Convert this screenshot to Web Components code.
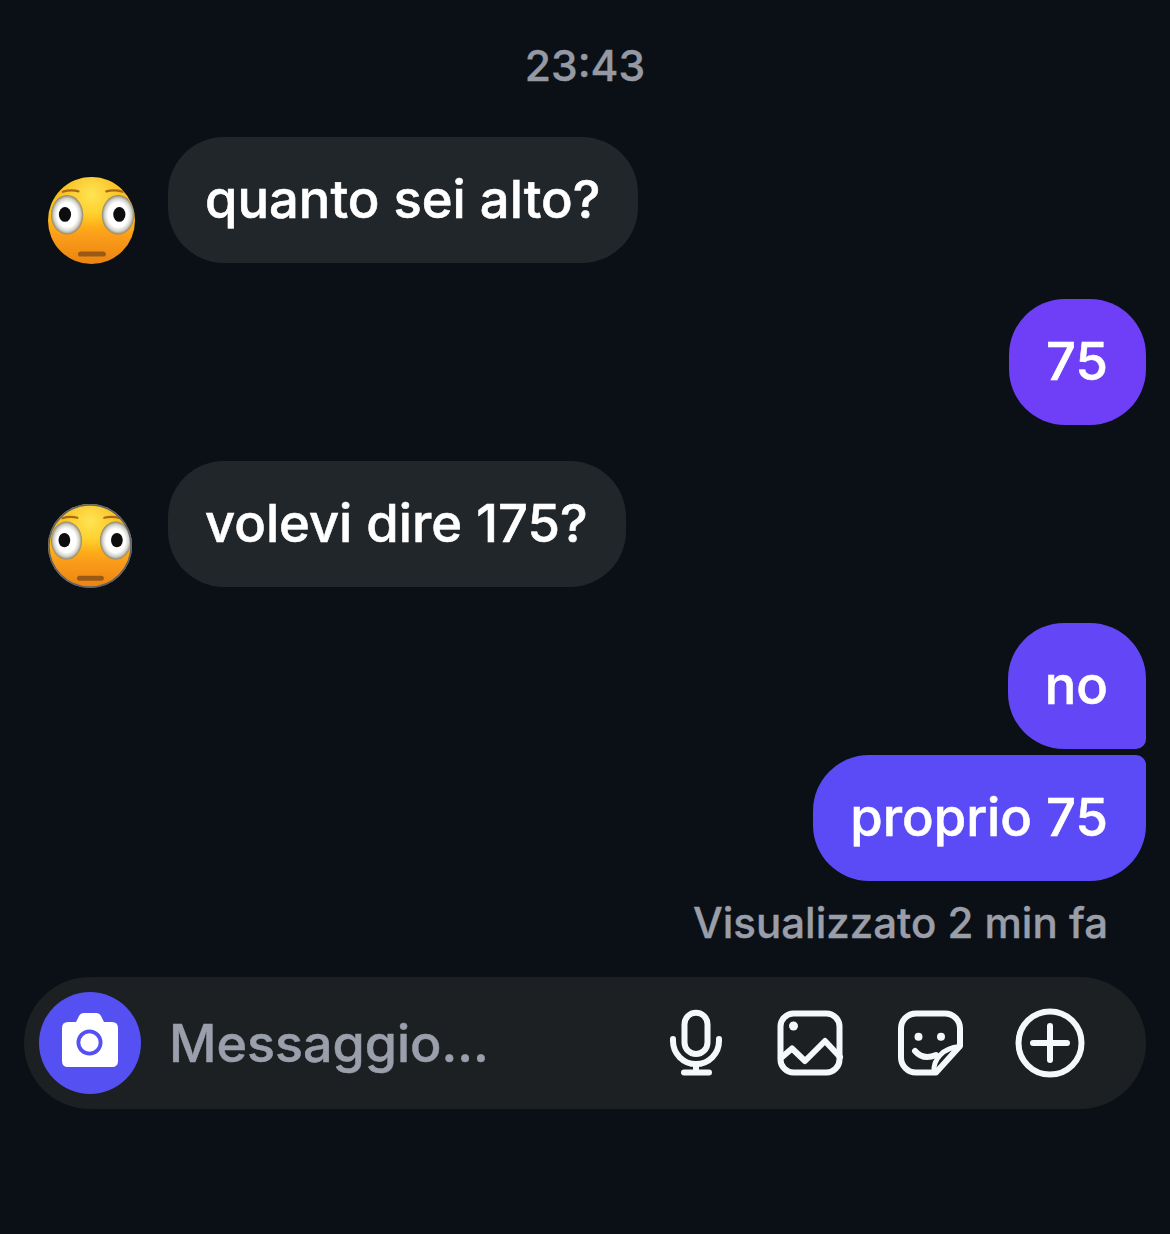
<!DOCTYPE html>
<html lang="it">
<head>
<meta charset="utf-8">
<title>Chat</title>
<style>
  html, body { margin: 0; background: #0b1016; }
  body { font-family: Inter, "Liberation Sans", sans-serif; color: #fff; }
</style>
</head>
<body>
<chat-screen>
  <chat-time>23:43</chat-time>
  <chat-row>
    <flushed-emoji slot="avatar" size="87"></flushed-emoji>
    <chat-bubble color="#21262b">quanto sei alto?</chat-bubble>
  </chat-row>
  <chat-row side="out">
    <chat-bubble color="#6e3ff6">75</chat-bubble>
  </chat-row>
  <chat-row>
    <flushed-emoji slot="avatar" size="84" ringed></flushed-emoji>
    <chat-bubble color="#21262b">volevi dire 175?</chat-bubble>
  </chat-row>
  <chat-row side="out">
    <chat-bubble color="#6346f6" corner="last">no</chat-bubble>
    <chat-bubble color="#5b4bf6" corner="first">proprio 75</chat-bubble>
  </chat-row>
  <chat-seen slot="footer">Visualizzato 2 min fa</chat-seen>
  <chat-composer slot="footer" placeholder="Messaggio..."></chat-composer>
</chat-screen>

<script>
class ChatScreen extends HTMLElement {
    constructor() {
        super();
        this.attachShadow({ mode: "open" });
        this.shadowRoot.innerHTML = `
            <style>
                :host { display: block; width: 1170px; height: 1234px; overflow: hidden; }
                .thread { display: flex; flex-direction: column; gap: 36px; }
            </style>
            <div class="thread"><slot></slot></div>
            <slot name="footer"></slot>
        `;
    }
}

class ChatTime extends HTMLElement {
    constructor() {
        super();
        this.attachShadow({ mode: "open" });
        this.shadowRoot.innerHTML = `
            <style>
                :host {
                    display: block;
                    height: 50px;
                    padding: 41px 0 10px;
                    line-height: 50px;
                    text-align: center;
                    font-size: 42.500px;
                    font-weight: 500;
                    -webkit-text-stroke: 0.4px;
                    color: #9499a3;
                }
            </style>
            <slot></slot>
        `;
    }
}

class ChatRow extends HTMLElement {
    constructor() {
        super();
        this.attachShadow({ mode: "open" });
        this.shadowRoot.innerHTML = `
            <style>
                :host { display: flex; align-items: flex-end; padding: 0 24px 0 48px; }
                :host([side="out"]) { justify-content: flex-end; }
                .avatar { display: block; width: 120px; flex: none; margin-bottom: -1px; }
                :host([side="out"]) .avatar { display: none; }
                .stack { display: flex; flex-direction: column; align-items: flex-end; gap: 6px; }
            </style>
            <div class="avatar"><slot name="avatar"></slot></div>
            <div class="stack"><slot></slot></div>
        `;
    }
}

class ChatBubble extends HTMLElement {
    constructor() {
        super();
        this.attachShadow({ mode: "open" });
        this.shadowRoot.innerHTML = `
            <style>
                :host {
                    display: block;
                    height: 126px;
                    padding: 0 38px 0 37px;
                    line-height: 125px;
                    font-size: 52.500px;
                    font-weight: 500;
                    -webkit-text-stroke: 0.6px;
                    border-radius: 56px;
                    background: var(--bubble);
                    color: #fff;
                    white-space: nowrap;
                }
                :host([corner="last"]) { border-bottom-right-radius: 10px; }
                :host([corner="first"]) { border-top-right-radius: 10px; }
            </style>
            <slot></slot>
        `;
    }
    connectedCallback() {
        this.style.setProperty("--bubble", this.getAttribute("color"));
    }
}

let emojiCount = 0;

class FlushedEmoji extends HTMLElement {
    constructor() {
        super();
        this.attachShadow({ mode: "open" });
    }
    connectedCallback() {
        const size = this.getAttribute("size") || 87;
        const id = "e" + (++emojiCount);
        const ring = this.hasAttribute("ringed")
            ? `<circle cx="50" cy="50" r="49" fill="none" stroke="#5f626c" stroke-width="2"/>`
            : "";
        this.shadowRoot.innerHTML = `
            <style>
                :host { display: block; width: ${size}px; height: ${size}px; }
                svg { display: block; width: 100%; height: 100%; }
            </style>
            <svg viewBox="0 0 100 100">
                <defs>
                    <linearGradient id="${id}f" x1="0" y1="0" x2="0" y2="1">
                        <stop offset="0" stop-color="#f8b820"/>
                        <stop offset="0.4" stop-color="#ffc414"/>
                        <stop offset="0.68" stop-color="#fb9d1a"/>
                        <stop offset="1" stop-color="#ea8410"/>
                    </linearGradient>
                    <radialGradient id="${id}h" cx="0.5" cy="0.2" r="0.38">
                        <stop offset="0" stop-color="#ffe85a" stop-opacity="0.9"/>
                        <stop offset="1" stop-color="#ffe85a" stop-opacity="0"/>
                    </radialGradient>
                    <radialGradient id="${id}e">
                        <stop offset="0.62" stop-color="#ffffff"/>
                        <stop offset="0.83" stop-color="#d5d3cc"/>
                        <stop offset="1" stop-color="#8d8464"/>
                    </radialGradient>
                    <filter id="${id}b"><feGaussianBlur stdDeviation="0.600"/></filter>
                </defs>
                <circle cx="50" cy="50" r="50" fill="url(#${id}f)"/>
                <circle cx="50" cy="50" r="50" fill="url(#${id}h)"/>
                <g filter="url(#${id}b)">
                    <path d="M17 17 Q26 14 35 16.500" fill="none" stroke="#a86a18" stroke-width="2.500" stroke-linecap="round"/>
                    <path d="M67 16.500 Q76 14 86 17" fill="none" stroke="#a86a18" stroke-width="2.500" stroke-linecap="round"/>
                    <ellipse cx="22" cy="43.500" rx="18.500" ry="22.700" fill="url(#${id}e)"/>
                    <ellipse cx="80.500" cy="43.500" rx="18.700" ry="22.700" fill="url(#${id}e)"/>
                    <ellipse cx="19.500" cy="43" rx="7" ry="8.500" fill="#0c0c10"/>
                    <ellipse cx="82" cy="43" rx="7" ry="8.500" fill="#0c0c10"/>
                    <rect x="34.500" y="85.500" width="32" height="6" rx="3" fill="#9a5a18"/>
                </g>
                ${ring}
            </svg>
        `;
    }
}

class ChatSeen extends HTMLElement {
    constructor() {
        super();
        this.attachShadow({ mode: "open" });
        this.shadowRoot.innerHTML = `
            <style>
                :host {
                    display: block;
                    padding: 17px 62px 29px 0;
                    line-height: 50px;
                    text-align: right;
                    font-size: 42px;
                    font-weight: 500;
                    -webkit-text-stroke: 0.4px;
                    color: #9a9ea9;
                }
            </style>
            <slot></slot>
        `;
    }
}

const composerTemplate = document.createElement("template");
composerTemplate.innerHTML = `
    <style>
        :host {
            display: flex;
            align-items: center;
            height: 132px;
            margin: 0 24px;
            padding: 0 60px 0 15px;
            box-sizing: border-box;
            border-radius: 66px;
            background: #1c2022;
        }
        .camera {
            flex: none;
            display: flex;
            align-items: center;
            justify-content: center;
            width: 102px;
            height: 102px;
            border-radius: 50%;
            background: #5450f2;
        }
        .camera svg { margin-bottom: 6px; }
        .placeholder {
            flex: 1;
            margin-left: 28px;
            font-size: 52px;
            font-weight: 500;
            -webkit-text-stroke: 0.5px;
            color: #9a9fab;
        }
        .icons { display: flex; align-items: center; gap: 48px; }
        .icons .mic { margin-right: -6px; }
        svg { display: block; flex: none; fill: none; stroke: #f5f7f8; stroke-linecap: round; stroke-linejoin: round; }
    </style>
    <div class="camera">
        <svg width="56" height="54" viewBox="0 0 56 54" style="stroke:none">
            <path fill="#fff" fill-rule="evenodd" d="M6 9H14L17 3Q18.500 0 22 0H34Q37.500 0 39 3L42 9H50Q56 9 56 15V48Q56 54 50 54H6Q0 54 0 48V15Q0 9 6 9ZM27.500 16.500A13 13 0 1 0 27.500 42.500A13 13 0 1 0 27.500 16.500Z"/>
            <circle cx="27.500" cy="29.500" r="9.200" fill="#fff"/>
        </svg>
    </div>
    <div class="placeholder"></div>
    <div class="icons">
        <svg class="mic" width="72" height="72" viewBox="0 0 72 72" stroke-width="6">
            <rect x="24.500" y="5.700" width="23" height="41.300" rx="11.500"/>
            <path d="M13 32V34A23 23 0 0 0 59 34V32"/>
            <path d="M36 57V65.500M24 65.500H49"/>
        </svg>
        <svg width="72" height="72" viewBox="0 0 72 72" stroke-width="6">
            <rect x="6.500" y="6.500" width="59" height="59" rx="13"/>
            <circle cx="19.500" cy="19" r="4.500" fill="#f5f7f8" stroke="none"/>
            <path d="M7 51L18 41.500L31 54L51 34L66 50"/>
        </svg>
        <svg width="72" height="72" viewBox="0 0 72 72" stroke-width="6">
            <path d="M66 39L42 65.500H22A15 15 0 0 1 7 50.500V21.500A15 15 0 0 1 22 6.500H51A15 15 0 0 1 66 21.500Z"/>
            <path d="M40 65C39 52 49 41 65.500 39.500" stroke-width="5"/>
            <path d="M21 44C27 51 35 51 42 48"/>
            <circle cx="24.500" cy="29.700" r="4" fill="#f5f7f8" stroke="none"/>
            <circle cx="47" cy="29.700" r="4" fill="#f5f7f8" stroke="none"/>
        </svg>
        <svg width="72" height="72" viewBox="0 0 72 72" stroke-width="6">
            <circle cx="36" cy="36" r="31.500"/>
            <path d="M19 36H53M36 19V53"/>
        </svg>
    </div>
`;

class ChatComposer extends HTMLElement {
    constructor() {
        super();
        this.attachShadow({ mode: "open" });
        this.shadowRoot.appendChild(composerTemplate.content.cloneNode(true));
    }
    connectedCallback() {
        this.shadowRoot.querySelector(".placeholder").textContent = this.getAttribute("placeholder");
    }
}

customElements.define("chat-screen", ChatScreen);
customElements.define("chat-time", ChatTime);
customElements.define("chat-row", ChatRow);
customElements.define("chat-bubble", ChatBubble);
customElements.define("flushed-emoji", FlushedEmoji);
customElements.define("chat-seen", ChatSeen);
customElements.define("chat-composer", ChatComposer);
</script>
</body>
</html>
